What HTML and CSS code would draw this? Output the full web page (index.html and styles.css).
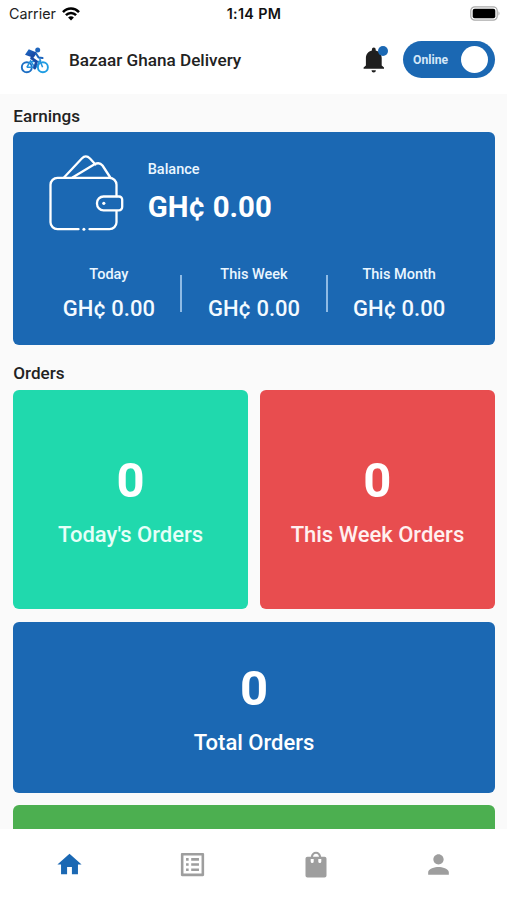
FILE: index.html
```html
<!DOCTYPE html>
<html lang="en">
<head>
<meta charset="utf-8">
<meta name="viewport" content="width=device-width, initial-scale=1">
<title>Bazaar Ghana Delivery</title>
<link rel="stylesheet" href="styles.css">
</head>
<body>
<div class="app">
  <div class="status">
    <div class="carrier"><span>Carrier</span>
      <svg width="18" height="14" viewBox="0 0 18 14" fill="none" stroke="#000" stroke-width="2.5"><path d="M1 5.1C5.5.3 12.500.3 17 5.100M3.900 8.200c2.900-3 7.300-3 10.200 0"/><path d="M9 13.500 6.100 10.500c1.700-1.600 4.100-1.600 5.800 0z" fill="#000" stroke="none"/></svg>
    </div>
    <div class="clock">1:14 PM</div>
    <div class="power"><svg width="31" height="15" viewBox="0 0 31 15"><rect x=".8" y=".8" width="26.400" height="13.400" rx="4" fill="#fff" stroke="#aaa" stroke-width="1.200"/><rect x="2.700" y="2.700" width="22.600" height="9.600" rx="2" fill="#000"/><path d="M28.500 5.300q2 2.200 0 4.400z" fill="#aaa"/></svg></div>
  </div>
  <header class="header">
    <svg class="logo" width="30" height="30" viewBox="0 0 30 30" fill="none">
      <defs><linearGradient id="g" x1="0" y1="0" x2="1" y2="1"><stop offset="0" stop-color="#1c6fc9"/><stop offset="1" stop-color="#1c3f9b"/></linearGradient></defs>
      <circle cx="6.800" cy="21.300" r="5" stroke="#1d6fc4" stroke-width="1.900"/>
      <circle cx="22.900" cy="21.300" r="5" stroke="#1f9de3" stroke-width="1.900"/>
      <path d="M6.800 21.300 10.500 15l5 7.200 4.500-7.500 2.600 6.500M10.500 15.500h10M19.500 12.500l1.300 2.500M6.800 21.300h7" stroke="#2592dc" stroke-width="1.500"/>
      <circle cx="17.700" cy="4" r="2.500" fill="#1e65bd"/>
      <path d="m8.800 3.300 6.500 2.700-3.500 5.300-6.800-2.600z" fill="url(#g)"/>
      <path d="m15.200 7.200-3.700 5 5 3.500-2 6.300" stroke="#1a4ba5" stroke-width="2.700" stroke-linejoin="round" stroke-linecap="round"/>
      <path d="m16 7.500 2.500 3.900 4 .6" stroke="#1d65bd" stroke-width="2" stroke-linejoin="round" stroke-linecap="round"/>
    </svg>
    <h1 class="title">Bazaar Ghana Delivery</h1>
    <div class="bell">
      <svg width="22" height="26" viewBox="0 0 22 26" fill="#1f1f1f"><path d="M8.900 3.400V2.500a1.900 1.900 0 0 1 3.800 0v.9c3.700.9 6 3.900 6 7.700v7.300l2.300 2.100v1.200H.6v-1.200l2.300-2.100v-7.300c0-3.800 2.300-6.800 6-7.700zM8.500 23.200h4.400a2.200 2.200 0 0 1-4.400 0z"/></svg>
      <span class="dot"></span>
    </div>
    <div class="toggle"><span>Online</span><i class="knob"></i></div>
  </header>
  <main class="content">
    <h2 class="section">Earnings</h2>
    <section class="earnings">
      <div class="balance">
        <svg width="76" height="78" viewBox="0 0 76 78" fill="none" stroke="#fff" stroke-width="2.300" stroke-linecap="round" stroke-linejoin="round">
          <path d="M30.500 75.200H9.500a7 7 0 0 1-7-7V30.800a7 7 0 0 1 7-7h52a7 7 0 0 1 7 7V42M68.500 57.500v10.700a7 7 0 0 1-7 7h-20"/>
          <path d="M16 23.500 33.800 4.500q4-4.200 8.200 0l5.500 6M24.500 23.500 46.500 10.300q5-2.500 8 1.200l7.800 12"/>
          <path d="M71 42.500H55.500a6.500 6.500 0 0 0-6.500 6.500v.8a6.500 6.500 0 0 0 6.500 6.500H71a3.200 3.200 0 0 0 3.200-3.200v-7.400a3.200 3.200 0 0 0-3.200-3.200z"/>
          <g fill="#fff" stroke="none"><circle cx="55.800" cy="49.300" r="1.600"/><circle cx="35.900" cy="75.200" r="1.500"/></g>
        </svg>
        <div><p class="label">Balance</p><p class="amount">GH¢ 0.00</p></div>
      </div>
      <div class="periods">
        <div class="period"><p class="label">Today</p><p class="sum">GH¢ 0.00</p></div>
        <div class="rule"></div>
        <div class="period"><p class="label">This Week</p><p class="sum">GH¢ 0.00</p></div>
        <div class="rule"></div>
        <div class="period"><p class="label">This Month</p><p class="sum">GH¢ 0.00</p></div>
      </div>
    </section>
    <h2 class="section orders-title">Orders</h2>
    <section class="orders">
      <div class="tile mint"><b>0</b><span>Today's Orders</span></div>
      <div class="tile red"><b>0</b><span>This Week Orders</span></div>
      <div class="tile total"><b>0</b><span>Total Orders</span></div>
      <div class="tile green"></div>
    </section>
  </main>
  <nav class="nav">
    <a class="active"><svg width="29" height="29" viewBox="0 0 24 24"><path d="M10 20v-6h4v6h5v-8h3L12 3 2 12h3v8z"/></svg></a>
    <a><svg width="31" height="31" viewBox="0 0 24 24"><path d="M19 5v14H5V5h14m1.100-2H3.900c-.5 0-.9.400-.9.900v16.200c0 .4.400.9.900.9h16.200c.4 0 .9-.5.900-.9V3.900c0-.5-.5-.9-.9-.9zM11 7h6v2h-6V7zm0 4h6v2h-6v-2zm0 4h6v2h-6v-2zM7 7h2v2H7V7zm0 4h2v2H7v-2zm0 4h2v2H7v-2z"/></svg></a>
    <a><svg width="22" height="27" viewBox="0 0 22 27"><path fill-rule="evenodd" d="M2.500 5.700h3.300C6.200 2.700 8.200.7 11 .7s4.800 2 5.200 5h3.300c1.200 0 2 .8 2 2v16.700c0 1.200-.8 2-2 2h-17c-1.200 0-2-.8-2-2V7.700c0-1.200.8-2 2-2zm5.500 0h6C13.700 3.900 12.600 2.800 11 2.800S8.300 3.900 8 5.700zM5.700 8v2.500a1.500 1.500 0 0 0 3 0V8zm7.600 0v2.500a1.500 1.500 0 0 0 3 0V8z"/></svg></a>
    <a><svg width="31" height="31" viewBox="0 0 24 24"><path d="M12 12c2.200 0 4-1.800 4-4s-1.800-4-4-4-4 1.800-4 4 1.800 4 4 4zm0 2c-2.700 0-8 1.300-8 4v2h16v-2c0-2.700-5.300-4-8-4z"/></svg></a>
  </nav>
</div>
</body>
</html>
```

FILE: styles.css
```css
* { box-sizing: border-box; margin: 0; padding: 0; }
body { font-family: Roboto, sans-serif; background: #fafafa; color: #222; }
.app { height: 900px; display: flex; flex-direction: column; overflow: hidden; }
.status { height: 27px; flex: none; background: #fff; display: grid; grid-template-columns: 1fr auto 1fr; align-items: center; padding: 0 6px 0 9px; font-family: Inter, sans-serif; font-size: 14.300px; color: #222; }
.carrier { display: flex; align-items: center; gap: 6px; }
.clock { font-weight: 600; font-size: 14.300px; letter-spacing: .35px; margin-left: -2px; color: #111; }
.power { display: flex; justify-content: flex-end; }
.header { height: 67px; flex: none; background: #fff; display: flex; align-items: center; padding: 0 12px 2px 20px; }
.logo { margin-top: 2px; }
.title { font-size: 17.150px; font-weight: 500; line-height: 20px; margin-left: 19px; flex: 1; }
.bell { position: relative; width: 22px; height: 26px; margin-right: 18px; }
.bell svg { display: block; }
.dot { position: absolute; left: 15px; top: -1px; width: 10px; height: 10px; border-radius: 50%; background: #1b68b3; }
.toggle { width: 92px; height: 37px; border-radius: 19px; background: #1b68b3; display: flex; align-items: center; justify-content: space-between; padding: 0 7px 0 10px; color: #d5e7f8; font-size: 12.200px; font-weight: 700; }
.knob { width: 27px; height: 27px; border-radius: 50%; background: #fff; }
.content { flex: 1; min-height: 0; overflow: hidden; padding: 11.700px 12.300px 0 13.300px; }
.section { font-size: 17.100px; font-weight: 500; line-height: 20px; }
.earnings { margin-top: 6.100px; height: 213.500px; border-radius: 6px; background: #1b68b3; color: #fff; padding-top: 22px; }
.balance { display: flex; gap: 23.400px; padding-left: 35px; height: 111px; }
.label { font-size: 14.500px; font-weight: 500; line-height: 20px; color: #eaf6ff; }
.balance .label { padding-top: 6px; }
.amount { font-size: 29.400px; font-weight: 700; line-height: 36px; margin-top: 9px; }
.periods { display: flex; padding: 0 24px; }
.period { flex: 1; text-align: center; }
.sum { font-size: 22px; font-weight: 500; line-height: 28px; margin-top: 10px; color: #f3faff; }
.rule { width: 2px; height: 37px; margin-top: 10px; background: #8fbbe5; }
.orders-title { margin-top: 17.900px; }
.orders { margin-top: 6.400px; display: grid; grid-template-columns: 1fr 1fr; gap: 12.300px; grid-template-rows: 219.700px 171px 171px; }
.tile { border-radius: 6px; display: flex; flex-direction: column; align-items: center; justify-content: center; color: #fff; padding-top: 1px; }
.tile b { font-size: 49px; line-height: 58px; font-weight: 700; }
.tile span { font-size: 22px; line-height: 26px; font-weight: 500; margin-top: 12px; }
.mint { background: #20d9ad; }
.mint span { color: #e6fff8; }
.red { background: #e84d4f; }
.red span { color: #fff0f0; }
.total, .green { grid-column: 1 / -1; }
.total { background: #1b68b3; }
.green { background: #4caf50; }
.nav { height: 71px; flex: none; background: #fff; display: flex; padding: 0 6.500px 0 7.500px; }
.nav a { flex: 1; display: flex; align-items: center; justify-content: center; fill: #9e9e9e; }
.nav .active { fill: #1b68b3; }
```
